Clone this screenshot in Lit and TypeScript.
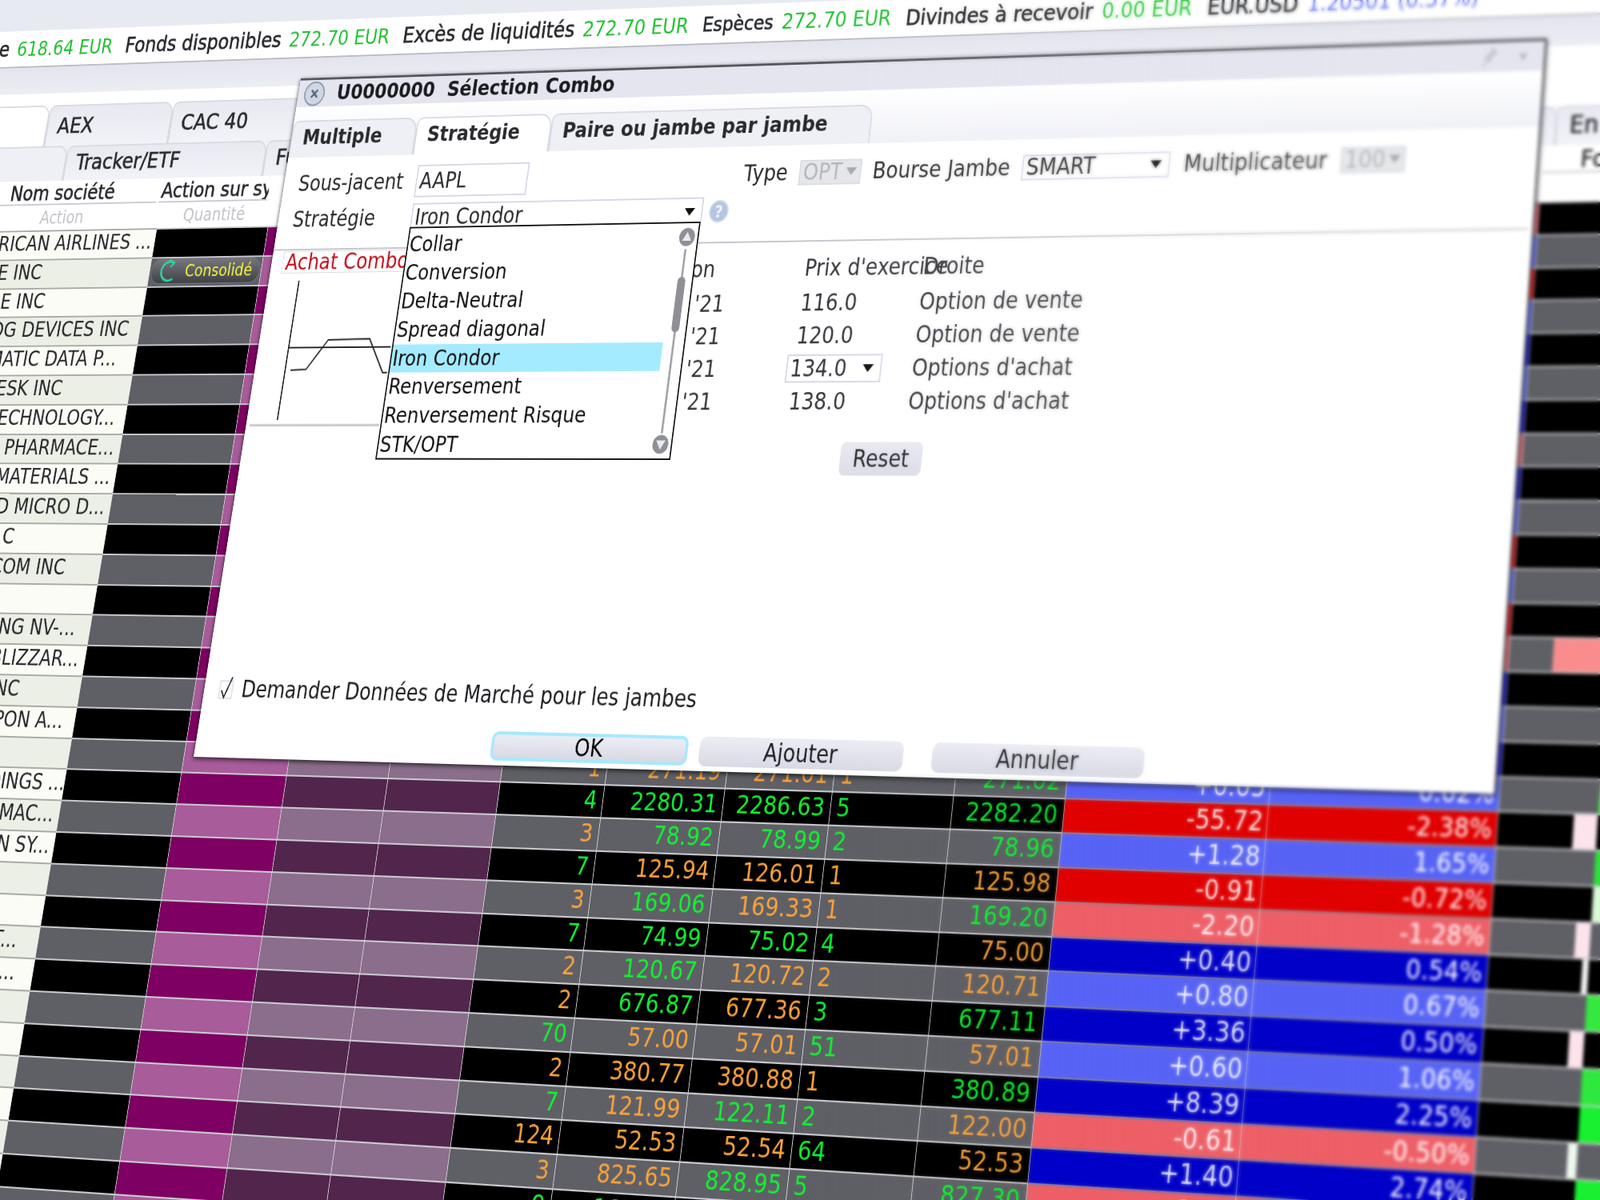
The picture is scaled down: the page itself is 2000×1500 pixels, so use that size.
import { LitElement, html, css, svg } from 'lit';
import { customElement } from 'lit/decorators.js';

// flat layout size of the dialog, and where it ends up in the photo
const W = 1880;
const H = 900;
const X0 = 600;
const Y0 = 200;
const QUAD = [[376, 98], [1934, 48], [1870, 992], [242, 946]];

function perspective() {
  const [p0, p1, p2, p3] = QUAD;
  const dx1 = p1[0] - p2[0], dx2 = p3[0] - p2[0], sx = p0[0] - p1[0] + p2[0] - p3[0];
  const dy1 = p1[1] - p2[1], dy2 = p3[1] - p2[1], sy = p0[1] - p1[1] + p2[1] - p3[1];
  const den = dx1 * dy2 - dx2 * dy1;
  const g = (sx * dy2 - dx2 * sy) / den;
  const h = (dx1 * sy - sx * dy1) / den;
  const a = p1[0] - p0[0] + g * p1[0], b = p3[0] - p0[0] + h * p3[0], c = p0[0];
  const d = p1[1] - p0[1] + g * p1[1], e = p3[1] - p0[1] + h * p3[1], f = p0[1];
  const m = [
    a / W, d / W, 0, g / W,
    b / H, e / H, 0, h / H,
    0, 0, 1, 0,
    c - a * X0 / W - b * Y0 / H, f - d * X0 / W - e * Y0 / H, 0, 1 - g * X0 / W - h * Y0 / H,
  ];
  return `matrix3d(${m.join(',')})`;
}

const NAMES = [
  'AMERICAN AIRLINES ...', 'APPLE INC', 'ADOBE INC', 'ANALOG DEVICES INC', 'AUTOMATIC DATA P...', 'AUTODESK INC',
  'ALIGN TECHNOLOGY...', 'ALEXION PHARMACE...', 'APPLIED MATERIALS ...', 'ADVANCED MICRO D...', 'ALPHABET C', 'AT BROADCOM INC', '',
  'ASML HOLDING NV-...', 'ACTIVISION BLIZZAR...', 'BIOGEN IDC INC', 'BAIDU INC - SPON A...', '', 'BOOKING HOLDINGS ...',
  'BIOMARIN PHARMAC...', 'CADENCE DESIGN SY...', '', '', 'CHARTER COMMUT...', 'COGNIZANT TECHII...', 'CHECK POINT SOF...',
  'CINTAS CORPORAT...', '', '', '', '', '', '',
];

// rows 17 and down are the only ones that show below the dialog
const QUOTES: Record<number, string[]> = {
  17: ['o1', 'o271.19', 'o271.01', 'o1', 'g271.02', '+0.05', '0.02%'],
  18: ['g4', 'g2280.31', 'g2286.63', 'g5', 'g2282.20', '-55.72', '-2.38%'],
  19: ['o3', 'g78.92', 'g78.99', 'g2', 'g78.96', '+1.28', '1.65%'],
  20: ['g7', 'o125.94', 'o126.01', 'o1', 'o125.98', '-0.91', '-0.72%'],
  21: ['o3', 'g169.06', 'o169.33', 'o1', 'g169.20', '-2.20', '-1.28%'],
  22: ['g7', 'g74.99', 'g75.02', 'g4', 'o75.00', '+0.40', '0.54%'],
  23: ['o2', 'g120.67', 'o120.72', 'o2', 'o120.71', '+0.80', '0.67%'],
  24: ['o2', 'g676.87', 'o677.36', 'g3', 'g677.11', '+3.36', '0.50%'],
  25: ['g70', 'o57.00', 'o57.01', 'g51', 'o57.01', '+0.60', '1.06%'],
  26: ['o2', 'o380.77', 'o380.88', 'o1', 'g380.89', '+8.39', '2.25%'],
  27: ['g7', 'o121.99', 'g122.11', 'g2', 'o122.00', '-0.61', '-0.50%'],
  28: ['o124', 'o52.53', 'o52.54', 'g64', 'o52.53', '+1.40', '2.74%'],
  29: ['o3', 'o825.65', 'g828.95', 'g5', 'g827.30', '-1.15', '-0.14%'],
  30: ['g9', 'g161.20', 'g161.31', 'g3', 'o161.25', '+0.72', '0.45%'],
};

// bars of the last column: negative lies left of the centre line
const BARS: Record<number, [number, string]> = {
  13: [-70, '#f98d8d'], 17: [60, '#3fe83f'], 18: [-30, '#fde3ec'], 19: [70, '#2fe03f'], 20: [60, '#d8fbd8'], 21: [-19, '#fde3ec'],
  22: [-8, '#f4f4f4'], 23: [70, '#35e83f'], 24: [-19, '#fde3ec'], 25: [70, '#2fe83f'], 26: [70, '#18f030'], 27: [-12, '#eef8ee'], 28: [70, '#18f030'],
  30: [70, '#18f030'],
};
const BAR_CENTRE = 127;

const TOP_TONES = ['sal', 'lb', 'red', 'lb', 'blue', 'lb', 'blue', 'sal', 'blue', 'lb', 'red', 'lb', 'red', 'sal', 'blue', 'lb', 'blue'];

function toneOf(row: number) {
  if (row < TOP_TONES.length) return TOP_TONES[row];
  const q = QUOTES[row];
  if (!q) return row % 2 ? 'sal' : 'blue';
  if (q[5].startsWith('+')) return row % 2 ? 'lb' : 'blue';
  return row % 2 ? 'sal' : 'red';
}

const STRATEGIES = ['Collar', 'Conversion', 'Delta-Neutral', 'Spread diagonal', 'Iron Condor', 'Renversement', 'Renversement Risque', 'STK/OPT'];

const LEGS = [
  ['116.0', 'Option de vente'],
  ['120.0', 'Option de vente'],
  ['134.0', "Options d'achat"],
  ['138.0', "Options d'achat"],
];

@customElement('app-root')
export class AppRoot extends LitElement {
  static styles = css`
    :host {
      display: block;
      position: relative;
      width: 2000px;
      height: 1500px;
      overflow: hidden;
      background: #e8eaf2;
      font-family: "DejaVu Sans", sans-serif;
      color: #2a2a2e;
    }
    .stage {
      position: absolute;
      left: 0;
      top: 0;
      width: 2900px;
      height: 1750px;
      transform-origin: 0 0;
      background: #fff;
    }
    .top { height: 119px; background: #e8eaf2; }
    .ticker {
      height: 53px;
      box-sizing: border-box;
      background: #fff;
      border-bottom: 2px solid #b9bbc2;
      display: flex;
      align-items: center;
      font-size: 28.5px;
      white-space: nowrap;
    }
    .ticker .lead { width: 268px; display: flex; justify-content: flex-end; }
    .ticker .item { margin-left: 22px; }
    .ticker .lead .item { margin-left: 0; }
    .ticker b { color: #26282c; font-weight: 400; font-size: 30px; -webkit-text-stroke: 0.7px #26282c; }
    .ticker b.tight { font-size: 27px; }
    .ticker b.mid { font-size: 29px; }
    .ticker .up { color: #1fbf2f; margin-left: 13px; }
    .ticker .fx { color: #5a6cf0; margin-left: 13px; }
    .band { height: 38px; background: linear-gradient(#e3e4ed, #eceef4); }
    .tabs { display: flex; align-items: flex-end; background: #fff; font-size: 31px; -webkit-text-stroke: 0.7px #2a2a2e; }
    .tabs.one { height: 75px; }
    .tabs.two { height: 49px; background: #eff0f5; }
    .tab {
      box-sizing: border-box;
      height: 58px;
      padding: 9px 0 0 16px;
      background: linear-gradient(#e8e9f1, #f2f3f8);
      border: 2px solid #d8dae3;
      border-bottom: none;
      border-radius: 10px 16px 0 0;
      white-space: nowrap;
      overflow: hidden;
    }
    .two .tab { height: 49px; padding-top: 3px; }
    .tab.on { background: #fff; }
    .t0 { width: 178px; }
    .t1 { width: 213px; }
    .t2 { width: 500px; }
    .t3 { width: 221px; background: #eff0f5; }
    .t4 { width: 340px; }
    .t5 { width: 1939px; }
    .t6 { width: 400px; }
    .heads { display: flex; height: 34px; font-size: 29px; background: #fff; }
    .subs { display: flex; height: 35px; font-size: 24px; line-height: 37px; color: #c2c3c9; background: #fff; }
    .heads span, .subs span { white-space: nowrap; text-align: center; flex: none; overflow: hidden; }
    .heads span { border-bottom: 2px solid #c9cad2; box-sizing: border-box; margin-right: 4px; line-height: 34px; -webkit-text-stroke: 0.7px #2a2a2e; }
    .heads .gap0 { width: 61px; border: none; margin: 0; }
    .heads .nom { width: 328px; }
    .heads .act { width: 183px; text-align: left; padding-left: 2px; }
    .heads .blank { width: 1906px; border: none; margin: 0; }
    .heads .fo { width: 300px; text-align: left; padding-left: 50px; }
    .subs .gap1 { width: 65px; }
    .subs .nom1 { width: 332px; }
    .subs .qty1 { width: 187px; }
    .rows { margin-left: 65px; }
    .row { display: flex; height: 39.8px; }
    .c {
      box-sizing: border-box;
      height: 100%;
      border-top: 2px solid #c9c9ce;
      border-left: 1px solid #d8d8dc;
      font-size: 31px;
      line-height: 34px;
      text-align: right;
      padding-right: 8px;
      white-space: nowrap;
      overflow: hidden;
    }
    .even .c { background: #000; }
    .odd .c { background: #5f6066; }
    .name {
      width: 332px;
      text-align: left;
      font-size: 28.5px;
      padding-left: 1px;
      color: #26262a;
      border-top-color: #a9aaa6;
    }
    .even .name { background: #fbfcf6; }
    .odd .name { background: #ecefe6; }
    .w-act { width: 187px; padding: 0; }
    .w-mag { width: 168px; }
    .even .w-mag { background: #7d0062; }
    .odd .w-mag { background: #a85c9a; }
    .w-p1 { width: 159px; }
    .w-p2 { width: 173px; }
    .even .pur { background: #52254d; }
    .odd .pur { background: #8b6d8c; }
    .w-qty { width: 158px; }
    .w-bid { width: 178px; }
    .w-ask { width: 156px; }
    .w-size { width: 173px; text-align: left; padding: 0 0 0 8px; }
    .w-last { width: 156px; }
    .w-chg { width: 277px; font-size: 32px; line-height: 37px; padding-right: 5px; }
    .w-pct { width: 302px; line-height: 36px; padding-right: 6px; }
    .chg { color: #fff; border-top-color: #8f8f99; }
    .c.red { background: #e00000; }
    .c.sal { background: #ee5f67; }
    .c.blue { background: #0000c8; }
    .c.lb { background: #5763f5; }
    .g { color: #12f232; }
    .o { color: #fca33c; }
    .w-bar { width: 400px; display: flex; padding: 0; }
    .bar { height: 100%; flex: none; }
    .pill {
      display: flex;
      align-items: center;
      height: 33px;
      margin: 1px 3px 0 3px;
      padding-left: 13px;
      gap: 13px;
      border-radius: 15px;
      background: linear-gradient(#75777d, #3f4147);
      box-shadow: 0 0 2px #a8aab0;
      color: #f4f43e;
      font-size: 23px;
      line-height: 26px;
    }

    .dialog {
      position: absolute;
      left: 600px;
      top: 200px;
      width: 1880px;
      height: 900px;
      box-sizing: border-box;
      background: #fff;
      border-top: 3px solid #55575c;
      border-right: 3px solid #6a6c72;
      box-shadow: 0 2px 6px rgba(0, 0, 0, 0.75);
      display: flex;
      flex-direction: column;
      font-size: 29.5px;
      white-space: nowrap;
    }
    .title {
      height: 37px;
      flex: none;
      display: flex;
      align-items: center;
      padding-left: 9px;
      gap: 19px;
      background: #e4e5ee;
      font-size: 28.5px;
      font-weight: 700;
      color: #1c1c20;
    }
    .title .grow { flex: 1; }
    .title .pins { display: flex; gap: 26px; padding-right: 20px; }
    .strip {
      height: 70px;
      flex: none;
      display: flex;
      align-items: flex-end;
      background: linear-gradient(#fff, #f0f1f7);
      font-size: 28.5px;
      font-weight: 700;
    }
    .dtab {
      box-sizing: border-box;
      height: 51px;
      padding: 5px 0 0 17px;
      border: 2px solid #d9dbe4;
      border-bottom: none;
      border-radius: 10px 18px 0 0;
      background: #eef0f5;
    }
    .dtab.on { background: #fff; }
    .d0 { width: 205px; }
    .d1 { width: 218px; }
    .d2 { width: 498px; }
    .line1 {
      margin-top: 14px;
      height: 44px;
      flex: none;
      display: grid;
      grid-template-columns: 217px 180px 338px 85px 94px 17px 222px 214px 20px 221px 90px;
      align-items: center;
    }
    .line2 {
      margin-top: 8px;
      height: 33px;
      flex: none;
      display: grid;
      grid-template-columns: 218px 461px 10px 30px;
      align-items: center;
    }
    .lab { padding-left: 24px; }
    .box {
      box-sizing: border-box;
      border: 2px solid #d6d8e6;
      padding-left: 4px;
      background: #fff;
      display: flex;
      align-items: center;
      justify-content: space-between;
      height: 100%;
    }
    .line1 .cb { height: 33px; }
    .box.off { background: #e6e7ea; border-color: #dcdde4; color: #b5b6bc; }
    .tri { width: 0; height: 0; border: 8px solid transparent; border-top: 10px solid #111; border-bottom: none; margin-right: 10px; flex: none; }
    .off .tri { border-top-color: #a9aab0; margin-right: 5px; }
    .rule { margin: 26px 5px 0 0; height: 2px; flex: none; background: #c4c6cc; }
    .legs { display: flex; position: relative; flex: none; }
    .chart { width: 560px; flex: none; }
    .combo-tag {
      display: block;
      box-sizing: border-box;
      margin: 1px 0 0 18px;
      width: 230px;
      height: 30px;
      line-height: 27px;
      padding-left: 4px;
      border: 1px solid #dadbe4;
      color: #c4101c;
      font-size: 30px;
      overflow: hidden;
    }
    .chart svg { display: block; margin-top: 4px; }
    .table { display: flex; flex-direction: column; padding-top: 14px; }
    .grid {
      display: grid;
      grid-template-columns: 170px 116px 177px 320px;
      grid-template-rows: 44px repeat(4, 42px);
      align-items: center;
      color: #33343a;
    }
    .grid .hd { height: 40px; line-height: 40px; align-self: start; }
    .grid .exp { text-align: right; }
    .grid .pad { padding-right: 20px; }
    .grid .sel { height: 36px; width: 142px; margin-left: -10px; }
    .reset {
      margin: 30px 0 0 372px;
      width: 120px;
      height: 42px;
      line-height: 42px;
      text-align: center;
      border-radius: 8px;
      background: linear-gradient(#e9eaf2, #dcdde7);
      color: #2a2a2e;
    }
    .list {
      position: absolute;
      left: 218px;
      top: -29px;
      width: 460px;
      height: 308px;
      box-sizing: border-box;
      border: 2px solid #111;
      background: #fff;
      display: flex;
      z-index: 2;
      color: #111;
    }
    .opts { flex: 1; padding-top: 3px; }
    .opt { height: 37.9px; line-height: 37px; padding-left: 2px; font-size: 29px; }
    .opt.on { background: #a5ebff; }
    .check {
      margin-top: auto;
      height: 36px;
      flex: none;
      display: flex;
      align-items: center;
      gap: 14px;
      padding-left: 24px;
      color: #1c1c20;
    }
    .btns { margin-top: 27px; margin-bottom: 8px; height: 34px; flex: none; display: flex; padding-left: 463px; }
    .btn {
      box-sizing: border-box;
      width: 296px;
      height: 36px;
      line-height: 36px;
      text-align: center;
      border-radius: 10px;
      background: linear-gradient(#ecedf4, #d8d9e4);
      color: #202024;
      flex: none;
    }
    .btn.ok { border: 4px solid #a6e9ff; line-height: 28px; color: #000; }
    .btn.add { margin-left: 17px; }
    .btn.no { margin-left: 41px; }
    .dof {
      position: absolute;
      inset: 0;
      pointer-events: none;
      backdrop-filter: blur(2.2px);
      -webkit-mask-image: linear-gradient(to right, transparent 50%, #000 88%);
      mask-image: linear-gradient(to right, transparent 50%, #000 88%);
    }
  `;

  private renderRow(i: number) {
    const q = QUOTES[i];
    const tone = toneOf(i);
    const num = (v: string) => html`<span class=${v[0]}>${v.slice(1)}</span>`;
    const bar = BARS[i];
    return html`
      <div class="row ${i % 2 ? 'odd' : 'even'}">
        <div class="c name">${NAMES[i] ?? ''}</div>
        <div class="c w-act">${i === 1 ? html`
          <div class="pill">
            <svg width="30" height="32" viewBox="0 0 30 32"><path d="M22 5 A13 13 0 1 0 24 27" fill="none" stroke="#2bd6a0" stroke-width="3"/><path d="M15 1 L23 5 L18 11" fill="none" stroke="#2bd6a0" stroke-width="2.5"/></svg>
            Consolidé
          </div>` : ''}</div>
        <div class="c w-mag"></div>
        <div class="c w-p1 pur"></div>
        <div class="c w-p2 pur"></div>
        <div class="c w-qty">${q ? num(q[0]) : ''}</div>
        <div class="c w-bid">${q ? num(q[1]) : ''}</div>
        <div class="c w-ask">${q ? num(q[2]) : ''}</div>
        <div class="c w-size">${q ? num(q[3]) : ''}</div>
        <div class="c w-last">${q ? num(q[4]) : ''}</div>
        <div class="c w-chg chg ${tone}">${q ? q[5] : ''}</div>
        <div class="c w-pct chg ${tone}">${q ? q[6] : ''}</div>
        <div class="c w-bar">
          ${bar ? html`
            <span class="bar" style="width:${bar[0] < 0 ? BAR_CENTRE + bar[0] : BAR_CENTRE}px"></span>
            <span class="bar" style="width:${Math.abs(bar[0])}px;background:${bar[1]}"></span>` : ''}
        </div>
      </div>`;
  }

  private renderChart() {
    return html`
      <svg width="216" height="210" viewBox="0 0 216 210">
        ${svg`
          <path d="M50 6 V192" stroke="#222" stroke-width="2" fill="none"/>
          <path d="M50 96 H216" stroke="#222" stroke-width="2" fill="none"/>
          <path d="M59 126 L84 125 L113 86 L180 85 L209 130 H216" stroke="#222" stroke-width="2" fill="none"/>
          <path d="M6 199 H216" stroke="#c4c6cc" stroke-width="3" fill="none"/>
        `}
      </svg>`;
  }

  private renderScroll() {
    return html`
      <svg width="32" height="304" viewBox="0 0 32 304">
        <path d="M16 34 V272" stroke="#9a9ca2" stroke-width="3"/>
        <rect x="10" y="70" width="12" height="72" rx="6" fill="#8f9096"/>
        <circle cx="16" cy="18" r="12" fill="#8f9096"/>
        <path d="M16 11 L23 23 H9 Z" fill="#e9eaf0"/>
        <circle cx="16" cy="286" r="12" fill="#8f9096"/>
        <path d="M16 293 L23 281 H9 Z" fill="#e9eaf0"/>
      </svg>`;
  }

  render() {
    const rows = Array.from({ length: 33 }, (_, i) => this.renderRow(i));
    return html`
      <div class="stage" style="transform:${perspective()}">
        <div class="top"></div>
        <div class="ticker">
          <div class="lead"><span class="item"><b>Marge de maintenance</b><span class="up">618.64 EUR</span></span></div>
          <span class="item"><b>Fonds disponibles</b><span class="up">272.70 EUR</span></span>
          <span class="item"><b>Excès de liquidités</b><span class="up">272.70 EUR</span></span>
          <span class="item"><b class="tight">Espèces</b><span class="up">272.70 EUR</span></span>
          <span class="item"><b class="mid">Divindes à recevoir</b><span class="up">0.00 EUR</span></span>
          <span class="item"><b class="mid">EUR.USD</b><span class="fx">1.20501 (0.37%)</span></span>
        </div>
        <div class="band"></div>
        <div class="tabs one">
          <div class="tab on t0"></div>
          <div class="tab t1">AEX</div>
          <div class="tab t2">CAC 40</div>
        </div>
        <div class="tabs two">
          <div class="tab t3"></div>
          <div class="tab t4">Tracker/ETF</div>
          <div class="tab t5">Futures</div>
          <div class="tab t6">En portefeuille</div>
        </div>
        <div class="heads">
          <span class="gap0"></span>
          <span class="nom">Nom société</span>
          <span class="act">Action sur symbole</span>
          <span class="blank"></span>
          <span class="fo">Fonds</span>
        </div>
        <div class="subs">
          <span class="gap1"></span>
          <span class="nom1">Action</span>
          <span class="qty1">Quantité</span>
        </div>
        <div class="rows">${rows}</div>

        <div class="dialog">
          <div class="title">
            <svg width="36" height="36" viewBox="0 0 36 36">
              <circle cx="18" cy="18" r="16" fill="#cfd6e4" stroke="#8a95a8" stroke-width="2"/>
              <path d="M13 13 L23 23 M23 13 L13 23" stroke="#5b6576" stroke-width="3"/>
            </svg>
            <span>U0000000&nbsp; Sélection Combo</span>
            <span class="grow"></span>
            <span class="pins">
              <svg width="22" height="28" viewBox="0 0 22 28"><path d="M14 2 L20 9 L14 12 L10 20 L4 14 L11 8 Z M6 18 L1 26" fill="#c9cad2" stroke="#c9cad2" stroke-width="2"/></svg>
              <svg width="16" height="28" viewBox="0 0 16 28"><path d="M2 10 H14 L8 19 Z" fill="#b9bac2"/></svg>
            </span>
          </div>
          <div class="strip">
            <div class="dtab d0">Multiple</div>
            <div class="dtab on d1">Stratégie</div>
            <div class="dtab d2">Paire ou jambe par jambe</div>
          </div>
          <div class="line1">
            <span class="lab">Sous-jacent</span>
            <div class="box">AAPL</div>
            <span></span>
            <span>Type</span>
            <div class="box off cb">OPT<i class="tri"></i></div>
            <span></span>
            <span>Bourse Jambe</span>
            <div class="box cb">SMART<i class="tri"></i></div>
            <span></span>
            <span>Multiplicateur</span>
            <div class="box off cb">100<i class="tri"></i></div>
          </div>
          <div class="line2">
            <span class="lab">Stratégie</span>
            <div class="box">Iron Condor<i class="tri"></i></div>
            <span></span>
            <svg width="30" height="34" viewBox="0 0 30 34">
              <circle cx="15" cy="17" r="14" fill="#b4c6e0" stroke="#d5deee" stroke-width="2"/>
              <text x="15" y="25" text-anchor="middle" font-size="22" font-weight="700" fill="#eef3fb" font-family="DejaVu Sans">?</text>
            </svg>
          </div>
          <div class="rule"></div>
          <div class="legs">
            <div class="chart">
              <span class="combo-tag">Achat Combo</span>
              ${this.renderChart()}
            </div>
            <div class="table">
              <div class="grid">
                <span class="exp pad hd">Expiration</span><span></span>
                <span class="hd">Prix d'exercice</span><span class="hd">Droite</span>
                ${LEGS.map((l, i) => html`
                  <span class="exp">'21</span><span></span>
                  ${i === 2
                    ? html`<div class="box sel">${l[0]}<i class="tri"></i></div>`
                    : html`<span>${l[0]}</span>`}
                  <span>${l[1]}</span>`)}
              </div>
              <div class="reset">Reset</div>
            </div>
            <div class="list">
              <div class="opts">
                ${STRATEGIES.map((s) => html`<div class="opt ${s === 'Iron Condor' ? 'on' : ''}">${s}</div>`)}
              </div>
              ${this.renderScroll()}
            </div>
          </div>
          <div class="check">
            <svg width="22" height="36" viewBox="0 0 22 36">
              <rect x="1" y="8" width="20" height="22" fill="none" stroke="#dfe2ee" stroke-width="2"/>
              <path d="M4 20 L9 29 L19 3" fill="none" stroke="#222" stroke-width="2"/>
            </svg>
            <span>Demander Données de Marché pour les jambes</span>
          </div>
          <div class="btns">
            <div class="btn ok">OK</div>
            <div class="btn add">Ajouter</div>
            <div class="btn no">Annuler</div>
          </div>
        </div>
      </div>
      <div class="dof"></div>
    `;
  }
}
